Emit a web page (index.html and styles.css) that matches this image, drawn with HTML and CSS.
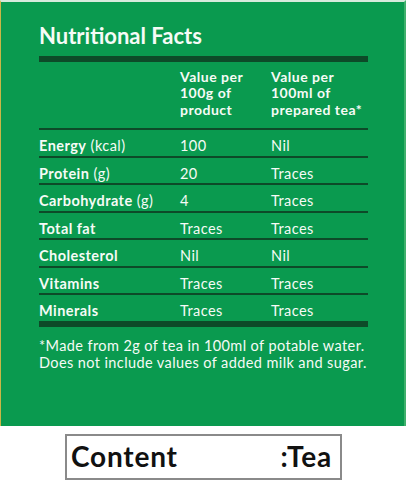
FILE: index.html
```html
<!DOCTYPE html>
<html lang="en">
<head>
    <meta charset="UTF-8">
    <meta name="viewport" content="width=device-width, initial-scale=1.0">
    <title>Nutritional Facts</title>
    <link rel="stylesheet" href="styles.css">
</head>
<body>
    <section class="panel">
        <h1 class="panel-title">Nutritional Facts</h1>
        <table class="facts">
            <thead>
                <tr>
                    <th></th>
                    <th>Value per<br>100g of<br>product</th>
                    <th>Value per<br>100ml of<br>prepared tea*</th>
                </tr>
            </thead>
            <tbody>
                <tr><td><b>Energy</b> (kcal)</td><td>100</td><td>Nil</td></tr>
                <tr><td><b>Protein</b> (g)</td><td>20</td><td>Traces</td></tr>
                <tr><td><b>Carbohydrate</b> (g)</td><td>4</td><td>Traces</td></tr>
                <tr><td><b>Total fat</b></td><td>Traces</td><td>Traces</td></tr>
                <tr><td><b>Cholesterol</b></td><td>Nil</td><td>Nil</td></tr>
                <tr><td><b>Vitamins</b></td><td>Traces</td><td>Traces</td></tr>
                <tr><td><b>Minerals</b></td><td>Traces</td><td>Traces</td></tr>
            </tbody>
        </table>
        <p class="note">*Made from 2g of tea in 100ml of potable water.<br>Does not include values of added milk and sugar.</p>
    </section>
    <div class="content-box">
        <span>Content</span>
        <span>:Tea</span>
    </div>
</body>
</html>
```

FILE: styles.css
```css
*,*::before,*::after{
    padding: 0;
    margin: 0;
    box-sizing: border-box;
}
body{
    background: #fff;
    font-family: Lato, "Open Sans", sans-serif;
    width: 406px;
    height: 480px;
    overflow: hidden;
}
.panel{
    width: 406px;
    height: 426px;
    background-color: #0a9a4f;
    border-top: 2px solid #d7eadc;
    border-left: 1px solid #c9b746;
    border-right: 2px solid #3fb06c;
    padding: 21px 0 0 38px;
    color: #f6fbf6;
}
.panel-title{
    font-size: 22px;
    line-height: 26px;
    font-weight: 700;
    margin-bottom: 7px;
}
.facts{
    width: 329px;
    border-collapse: collapse;
    border-top: 6px solid #0d4a28;
    border-bottom: 6px solid #0d4a28;
}
.facts th,
.facts td{
    text-align: left;
    vertical-align: top;
}
.facts th{
    font-size: 14px;
    line-height: 16.5px;
    font-weight: 700;
    letter-spacing: 0.5px;
    padding: 6.5px 0 10px;
    border-bottom: 2px solid #0d4a28;
}
.facts th:nth-child(1){ width: 141px; }
.facts th:nth-child(2){ width: 91px; }
.facts td{
    font-size: 14.5px;
    line-height: 17px;
    letter-spacing: 0.45px;
    padding: 7px 0 1.5px;
}
.facts tbody tr:not(:last-child) td{
    border-bottom: 2px solid #0d4a28;
}
.facts td b{
    font-weight: 700;
}
.note{
    margin-top: 10px;
    font-size: 14.5px;
    line-height: 17px;
    letter-spacing: 0.4px;
}
.content-box{
    margin: 8px 0 0 65px;
    width: 277px;
    height: 46px;
    border: 2px solid #8a8a8a;
    display: flex;
    justify-content: space-between;
    align-items: center;
    padding: 0 8px 3px 4px;
    font-size: 28px;
    font-weight: 700;
    letter-spacing: 0.8px;
    color: #111;
}
```
